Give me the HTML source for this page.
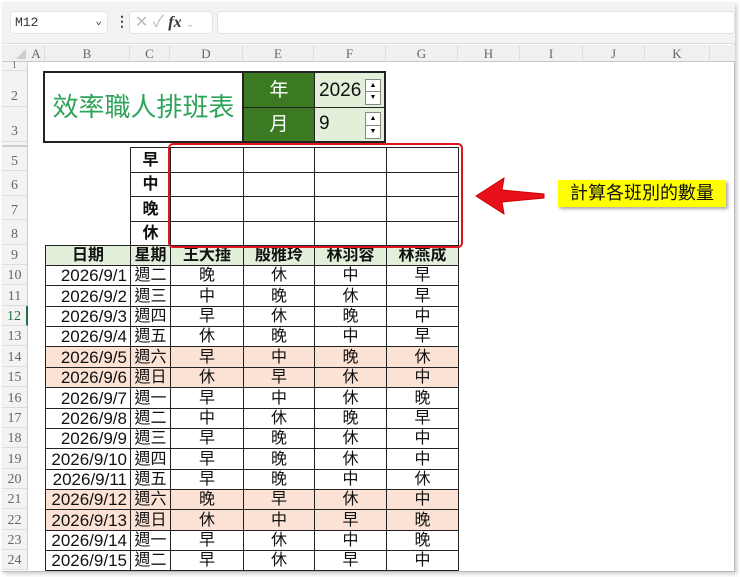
<!DOCTYPE html>
<html><head><meta charset="utf-8"><style>
*{box-sizing:border-box;margin:0;padding:0}
body{width:740px;height:577px;background:#fff;font-family:"Liberation Sans","Noto Sans CJK TC",sans-serif;position:relative;overflow:hidden}
.a{position:absolute}
#win{left:2px;top:2px;width:733px;height:570px;background:#fff;border-right:1px solid #bbb;border-bottom:1px solid #bbb;box-shadow:2px 2px 4px #ccc}
#fbar{left:2px;top:2px;width:733px;height:42px;background:#f3f3f3;border-bottom:1px solid #ddd}
.box{background:#fff;border-radius:4px;border:1px solid #e3e3e3}
.ch{top:45px;height:17px;background:#f0f0f0;border-right:1px solid #ddd;border-bottom:1px solid #c8c8c8;font-family:"Liberation Serif",serif;font-size:13px;color:#666;text-align:center;line-height:17px}
.rh{left:2px;width:26px;background:#f3f3f3;border-bottom:1px solid #ddd;border-right:1px solid #ccc;font-family:"Liberation Serif",serif;font-size:14px;color:#666;text-align:center}
.c{position:absolute;border:1px solid #222;font-size:16px;text-align:center;color:#111;overflow:hidden;white-space:nowrap}
.spin{position:absolute;width:16px;background:#fff;border:1px solid #888}
.spin div{height:50%;border-bottom:1px solid #888;font-size:7px;line-height:12px;text-align:center}
</style></head><body>
<div class="a" id="win"></div>
<div class="a" id="fbar"></div>
<div class="a box" style="left:10px;top:11px;width:98px;height:23px;font-family:'Liberation Mono',monospace;font-size:13px;line-height:21px;padding-left:4px;color:#333">M12<span style="position:absolute;right:5px;font-size:11px">&#8964;</span></div>
<div class="a" style="left:115px;top:13px;font-size:14px;color:#444;font-weight:bold">&#8942;</div>
<div class="a box" style="left:129px;top:11px;width:84px;height:23px;font-size:16px;color:#bbb;line-height:21px;padding-left:5px">✕ ✓ <i style="color:#333;font-family:'Liberation Serif',serif;font-weight:bold">fx</i> <span style="font-size:10px">&#8964;</span></div>
<div class="a box" style="left:217px;top:11px;width:518px;height:23px"></div>
<div class="a" style="left:2px;top:45px;width:26px;height:17px;background:#f0f0f0;border-bottom:1px solid #c8c8c8"></div>
<div class="a" style="left:16px;top:49px;width:0;height:0;border-left:10px solid transparent;border-bottom:10px solid #ccc"></div>
<div class="a ch" style="left:28px;width:17px">A</div>
<div class="a ch" style="left:45px;width:85px">B</div>
<div class="a ch" style="left:130px;width:40px">C</div>
<div class="a ch" style="left:170px;width:73px">D</div>
<div class="a ch" style="left:243px;width:71px">E</div>
<div class="a ch" style="left:314px;width:72px">F</div>
<div class="a ch" style="left:386px;width:72px">G</div>
<div class="a ch" style="left:458px;width:62px">H</div>
<div class="a ch" style="left:520px;width:63px">I</div>
<div class="a ch" style="left:583px;width:62px">J</div>
<div class="a ch" style="left:645px;width:65px">K</div>
<div class="a ch" style="left:710px;width:25px;border-right:none"></div>
<div class="a rh" style="top:62px;height:9px;font-size:9px;line-height:6px">1</div>
<div class="a rh" style="top:71px;height:36px;line-height:52px">2</div>
<div class="a rh" style="top:107px;height:35px;line-height:50px">3</div>
<div class="a rh" style="top:142px;height:5px;border-bottom:2px solid #ccc"></div>
<div class="a rh" style="top:147px;height:24px;line-height:30px">5</div>
<div class="a rh" style="top:171px;height:25px;line-height:30px">6</div>
<div class="a rh" style="top:196px;height:24px;line-height:30px">7</div>
<div class="a rh" style="top:220px;height:25px;line-height:30px">8</div>
<div class="a rh" style="top:245px;height:20px;line-height:22px">9</div>
<div id="rhs"></div>
<div class="c" style="left:43px;top:71px;width:201px;height:72px;border-width:2px;color:#2ea35a;font-size:26px;line-height:68px;font-weight:normal">效率職人排班表</div>
<div class="c" style="left:243px;top:71px;width:72px;height:37px;background:#3b7a22;color:#fff;font-size:19px;line-height:35px;border-top-width:2px">年</div>
<div class="c" style="left:243px;top:107px;width:72px;height:36px;background:#3b7a22;color:#fff;font-size:19px;line-height:34px;border-bottom-width:2px">月</div>
<div class="c" style="left:314px;top:71px;width:72px;height:37px;background:#e2f0d9;font-size:19px;line-height:35px;text-align:left;padding-left:4px;border-top-width:2px;border-right-width:2px">2026</div>
<div class="c" style="left:314px;top:107px;width:72px;height:36px;background:#e2f0d9;font-size:19px;line-height:32px;text-align:left;padding-left:4px;border-bottom-width:2px;border-right-width:2px">9</div>
<div class="spin" style="left:365px;top:79px;height:26px"><div>▲</div><div style="border:none">▼</div></div>
<div class="spin" style="left:365px;top:112px;height:27px"><div>▲</div><div style="border:none">▼</div></div>
<div id="g"></div>
<div class="a" style="left:168px;top:143px;width:295px;height:105px;border:2px solid #e0141e;border-radius:5px"></div>
<svg class="a" style="left:470px;top:172px" width="80" height="48"><path d="M6 24 L34 6 L32 18 L74 22 L74 26 L32 30 L34 42 Z" fill="#e8101a" stroke="#c00" stroke-width="1"/></svg>
<div class="a" style="left:558px;top:180px;width:168px;height:27px;background:#ffff00;box-shadow:2px 2px 3px #aaa;font-size:18px;line-height:27px;text-align:center;color:#111">計算各班別的數量</div>
<script>
var R=[["2026/9/1","週二","晚","休","中","早",0],["2026/9/2","週三","中","晚","休","早",0],["2026/9/3","週四","早","休","晚","中",0],["2026/9/4","週五","休","晚","中","早",0],["2026/9/5","週六","早","中","晚","休",1],["2026/9/6","週日","休","早","休","中",1],["2026/9/7","週一","早","中","休","晚",0],["2026/9/8","週二","中","休","晚","早",0],["2026/9/9","週三","早","晚","休","中",0],["2026/9/10","週四","早","晚","休","中",0],["2026/9/11","週五","早","晚","中","休",0],["2026/9/12","週六","晚","早","休","中",1],["2026/9/13","週日","休","中","早","晚",1],["2026/9/14","週一","早","休","中","晚",0],["2026/9/15","週二","早","休","早","中",0]];
var X=[45,130,170,243,314,386,458],h='',rh='';
function cell(x,y,w,ht,t,st){return '<div class="c" style="left:'+x+'px;top:'+y+'px;width:'+(w+1)+'px;height:'+(ht+1)+'px;line-height:'+ht+'px;'+(st||'')+'">'+t+'</div>';}
var ys=[147,171.5,196,220.5,245],lb=["早","中","晚","休"];
for(var i=0;i<4;i++){var y=Math.round(ys[i]),hh=Math.round(ys[i+1])-y;h+=cell(130,y,40,hh,lb[i],'font-weight:bold');for(var j=2;j<6;j++)h+=cell(X[j],y,X[j+1]-X[j],hh,'');}
var hd=["日期","星期","王大捶","殷雅玲","林羽容","林燕成"];
for(var j=0;j<6;j++)h+=cell(X[j],245,X[j+1]-X[j],20,hd[j],'background:#e2efda;font-weight:bold');
for(var r=0;r<15;r++){var y=Math.round(265+r*20.36),hh=Math.round(265+(r+1)*20.36)-y,bg=R[r][6]?'background:#fbe2d5;':'';
for(var j=0;j<6;j++)h+=cell(X[j],y,X[j+1]-X[j],hh,R[r][j],bg+(j==0?'text-align:right;padding-right:3px;font-size:17px;':''));
rh+='<div class="a rh" style="top:'+y+'px;height:'+hh+'px;line-height:'+(hh+2)+'px;'+(r==2?'color:#217346;border-right:2px solid #217346':'')+'">'+(r+10)+'</div>';}
document.getElementById('g').innerHTML=h;document.getElementById('rhs').innerHTML=rh;
</script>
</body></html>
